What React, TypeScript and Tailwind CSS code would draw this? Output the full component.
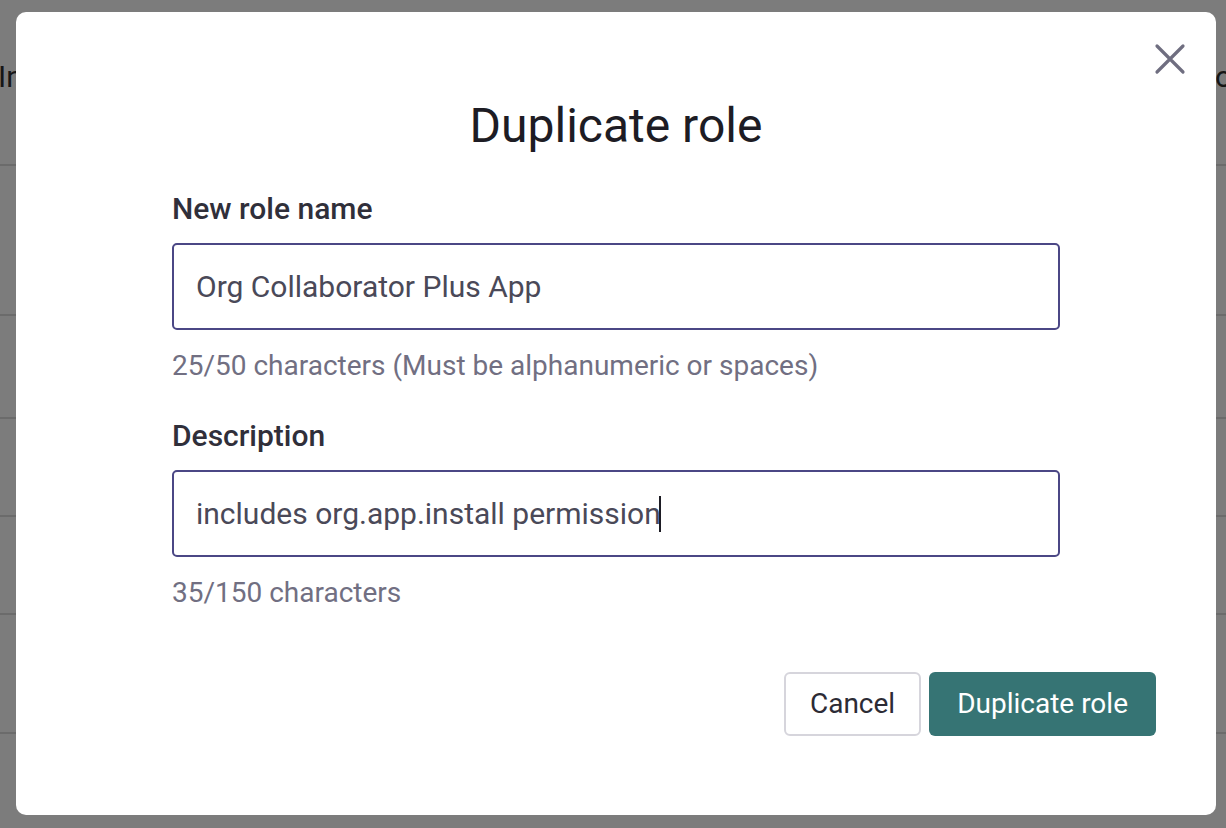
const rows = [
  'h-[150px]',
  'h-[103px]',
  'h-[98px]',
  'h-[98px]',
  'h-[119px]',
];

function Field({ label, value, helper, caret }: { label: string; value: string; helper: string; caret?: boolean }) {
  return (
    <div className="flex flex-col">
      <label className="text-[30px] leading-[36px] font-medium text-[#302f3a]">{label}</label>
      <div className="mt-4 flex h-[87px] items-center rounded-[5px] border-2 border-[#4b4785] px-[22px]">
        <span className="text-[30px] text-[#4a4958]">{value}</span>
        {caret && <span className="-ml-[2px] h-[36px] w-[2px] bg-[#1d1c24]" />}
      </div>
      <p className="mt-[18px] text-[28px] leading-[36px] text-[#716f82]">{helper}</p>
    </div>
  );
}

export default function App() {
  return (
    <div className="relative h-[828px] w-full overflow-hidden bg-[#7c7c7c] font-['Roboto','Liberation_Sans',sans-serif]">
      {/* page behind the overlay */}
      <div className="flex flex-col">
        <div className="flex h-[166px] items-start justify-between border-b-2 border-[#6b6b6b] pt-[54px] text-[30px] text-[#161616]">
          <span className="-ml-[2px]">In</span>
          <span className="-mr-[6px]">o</span>
        </div>
        {rows.map((h, i) => (
          <div key={i} className={`${h} border-b-2 border-[#6b6b6b]`} />
        ))}
      </div>

      {/* modal */}
      <div className="absolute left-4 top-3 h-[803px] w-[1200px] rounded-[10px] bg-white">
        <button className="absolute right-[30px] top-[31px] text-[#6f6e80]">
          <svg width="32" height="32" viewBox="0 0 32 32" fill="none" stroke="currentColor" strokeWidth="3.2" strokeLinecap="round">
            <path d="M3 3L29 29M29 3L3 29" />
          </svg>
        </button>

        <h1 className="mt-[86px] text-center text-[48px] leading-[56px] text-[#1d1c24]">Duplicate role</h1>

        <div className="mx-auto mt-[37px] flex w-[888px] flex-col gap-[34px]">
          <Field
            label="New role name"
            value="Org Collaborator Plus App"
            helper="25/50 characters (Must be alphanumeric or spaces)"
          />
          <Field
            label="Description"
            value="includes org.app.install permission"
            helper="35/150 characters"
            caret
          />
        </div>

        <div className="mt-[61px] flex justify-end gap-[8px] pr-[60px]">
          <button className="h-[64px] rounded-[6px] border-2 border-[#d6d5dc] bg-white px-[24px] text-[28px] text-[#2c2b35]">
            Cancel
          </button>
          <button className="h-[64px] rounded-[6px] bg-[#367474] px-[28px] text-[28px] text-white">
            Duplicate role
          </button>
        </div>
      </div>
    </div>
  );
}
